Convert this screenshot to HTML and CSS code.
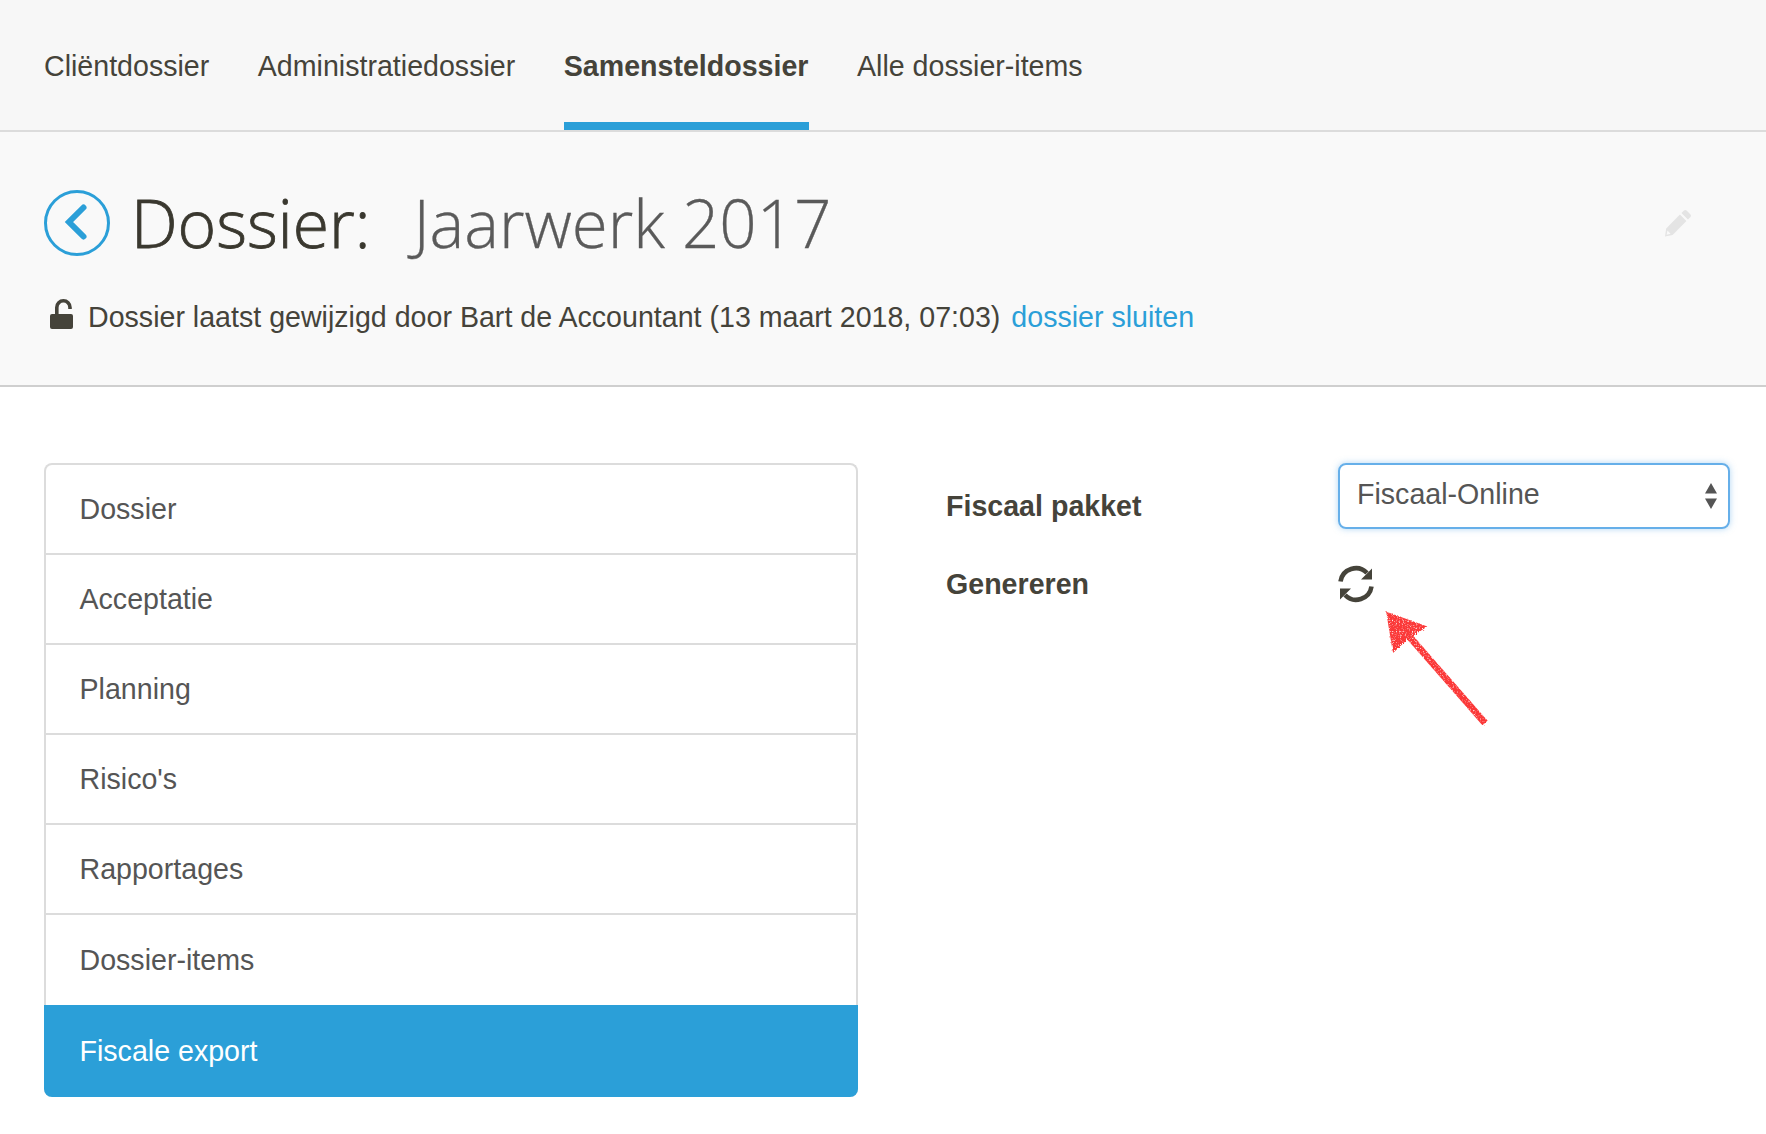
FILE: index.html
```html
<!DOCTYPE html>
<html lang="nl">
<head>
  <meta charset="UTF-8">
  <title>Dossier: Jaarwerk 2017</title>
  <link rel="stylesheet" href="styles.css">
</head>
<body>
  <nav class="tabs">
    <a class="tab">Cliëntdossier</a>
    <a class="tab">Administratiedossier</a>
    <a class="tab active">Samensteldossier</a>
    <a class="tab">Alle dossier-items</a>
  </nav>

  <header class="dossier-head">
    <div class="title-row">
      <svg class="back" viewBox="0 0 66 66" width="66" height="66">
        <circle cx="33" cy="33" r="31.5" fill="none" stroke="#2b9fd8" stroke-width="3"/>
        <path d="M39.5 17.5 L25 32 L39.5 46.5" fill="none" stroke="#2b9fd8" stroke-width="6" stroke-linecap="round" stroke-linejoin="miter"/>
      </svg>
      <h1><span class="title-key">Dossier:</span><span class="title-name">Jaarwerk 2017</span></h1>
      <svg class="pencil" viewBox="0 0 28 28" width="28" height="28">
        <path d="M20 1.5a2 2 0 0 1 2.6 0l3.9 3.9a2 2 0 0 1 0 2.6l-2.6 2.6-6.5-6.5z M15.9 5.6l6.5 6.5L8.6 26 1 27.6 2.2 19.4z" fill="#e4e4e4"/>
        <path d="M3.4 21.5l3.2 3.2-4 1z" fill="#f9f9f9"/>
      </svg>
    </div>
    <div class="status">
      <svg class="lock" viewBox="0 0 24 30" width="24" height="30">
        <path d="M6.8 15V8.4a6.6 6.6 0 0 1 13.2 0v1.6" fill="none" stroke="#45433a" stroke-width="3.6"/>
        <rect x="0" y="15" width="23" height="15" rx="2" fill="#45433a"/>
      </svg>
      <span>Dossier laatst gewijzigd door Bart de Accountant (13 maart 2018, 07:03)</span>
      <a class="link">dossier sluiten</a>
    </div>
  </header>

  <main class="content">
    <ul class="side-list">
      <li>Dossier</li>
      <li>Acceptatie</li>
      <li>Planning</li>
      <li>Risico's</li>
      <li>Rapportages</li>
      <li class="tall">Dossier-items</li>
      <li class="active">Fiscale export</li>
    </ul>
    <div class="form">
      <div class="form-row pakket">
        <label>Fiscaal pakket</label>
        <div class="select">
          <span>Fiscaal-Online</span>
          <svg viewBox="0 0 14 26" width="14" height="26">
            <path d="M7 0l6 10.5H1z M7 26l6-10.5H1z" fill="#555"/>
          </svg>
        </div>
      </div>
      <div class="form-row genereren">
        <label>Genereren</label>
        <svg class="refresh" viewBox="0 0 38 38" width="38" height="38">
          <path d="M3.5 16.5A15.5 15.5 0 0 1 30 8" fill="none" stroke="#45433a" stroke-width="4.6"/>
          <path d="M34.5 21.5A15.5 15.5 0 0 1 8 30" fill="none" stroke="#45433a" stroke-width="4.6"/>
          <path d="M35 3.5V14.5H24z M3 34.5V23.5H14z" fill="#45433a"/>
        </svg>
      </div>
    </div>
  </main>

  <svg class="arrow" viewBox="0 0 112 122" width="112" height="122">
    <defs>
      <filter id="crayon" x="-10%" y="-10%" width="120%" height="120%">
        <feTurbulence type="fractalNoise" baseFrequency="0.7" numOctaves="2" seed="4" result="noise"/>
        <feDisplacementMap in="SourceGraphic" in2="noise" scale="4" result="rough"/>
        <feColorMatrix in="noise" type="matrix" values="0 0 0 0 0  0 0 0 0 0  0 0 0 0 0  0 0 0 -3 2.6" result="grain"/>
        <feComposite in="rough" in2="grain" operator="in"/>
      </filter>
    </defs>
    <g filter="url(#crayon)" fill="#fb3838" stroke="#fb3838">
      <path d="M6 4 L42 17 L25 28 L12 40 Z" stroke-width="3"/>
      <path d="M25 24 L103 113" stroke-width="7" fill="none"/>
    </g>
  </svg>
</body>
</html>
```

FILE: styles.css
```css
* {
  box-sizing: border-box;
}

body {
  margin: 0;
  font-family: "Liberation Sans", Arial, sans-serif;
  font-size: 28.6px;
  color: #45433a;
  background-color: #fff;
  position: relative;
  height: 1134px;
  overflow: hidden;
}

.tabs {
  display: flex;
  gap: 48.5px;
  height: 132px;
  padding-left: 44px;
  background-color: #f7f7f7;
  border-bottom: 2px solid #dcdcdc;
}

.tab {
  height: 130px;
  padding-top: 48px;
  line-height: 36px;
}

.tab.active {
  font-weight: bold;
  border-bottom: 8px solid #2b9fd8;
}

.dossier-head {
  height: 255px;
  padding: 57px 44px 0;
  background-color: #f9f9f9;
  border-bottom: 2px solid #cfcfcf;
}

.title-row {
  display: flex;
  align-items: center;
  gap: 21px;
  height: 68px;
}

.title-row h1 {
  flex: 1;
  margin: -1px 0 0;
  font-family: "Open Sans", sans-serif;
  font-size: 65.5px;
  font-weight: 300;
  line-height: 68px;
  white-space: nowrap;
}

.title-key {
  font-size: 66px;
  color: #3a382f;
  margin-right: 43px;
  -webkit-text-stroke: 0.8px #3a382f;
}

.title-name {
  color: #5a5a5a;
  -webkit-text-stroke: 0.3px #5a5a5a;
}

.pencil {
  margin-right: 30px;
}

.status {
  display: flex;
  align-items: center;
  margin-top: 42px;
  padding-left: 6px;
  line-height: 36px;
}

.lock {
  margin-right: 14px;
  margin-top: -6px;
}

.link {
  color: #2b9fd8;
  margin-left: 11px;
}

.content {
  display: flex;
  padding: 76px 36px 0 44px;
}

.side-list {
  width: 814px;
  margin: 0;
  padding: 0;
  list-style: none;
  color: #555;
  border: 2px solid #dcdcdc;
  border-bottom: 0;
  border-radius: 8px;
}

.side-list li {
  height: 90px;
  padding: 26px 0 0 33.5px;
  line-height: 36px;
  border-bottom: 2px solid #dcdcdc;
}

.side-list li.tall {
  padding-top: 27px;
  border-bottom: 0;
}

.side-list li.active {
  height: 92px;
  margin: 0 -2px;
  padding: 28px 0 0 35.5px;
  color: #fff;
  background-color: #2b9fd8;
  border-bottom: 0;
  border-radius: 0 0 8px 8px;
}

.form {
  flex: 1;
  padding-left: 88px;
}

.form-row {
  display: flex;
}

.form-row label {
  width: 392px;
  font-weight: bold;
}

.pakket label {
  padding-top: 27px;
}

.select {
  display: flex;
  justify-content: space-between;
  align-items: center;
  width: 392px;
  height: 66px;
  padding: 0 10px 0 17px;
  color: #555;
  border: 2px solid #66afe9;
  border-radius: 8px;
  box-shadow: 0 0 6px rgba(102, 175, 233, 0.5);
}

.select span {
  margin-top: -3px;
}

.genereren {
  align-items: center;
  margin-top: 36px;
}

.genereren label {
  padding-top: 1px;
}

.refresh {
  display: block;
  margin-left: -1px;
}

/* annotation drawn over the screenshot */
.arrow {
  position: absolute;
  left: 1382px;
  top: 610px;
}
```
